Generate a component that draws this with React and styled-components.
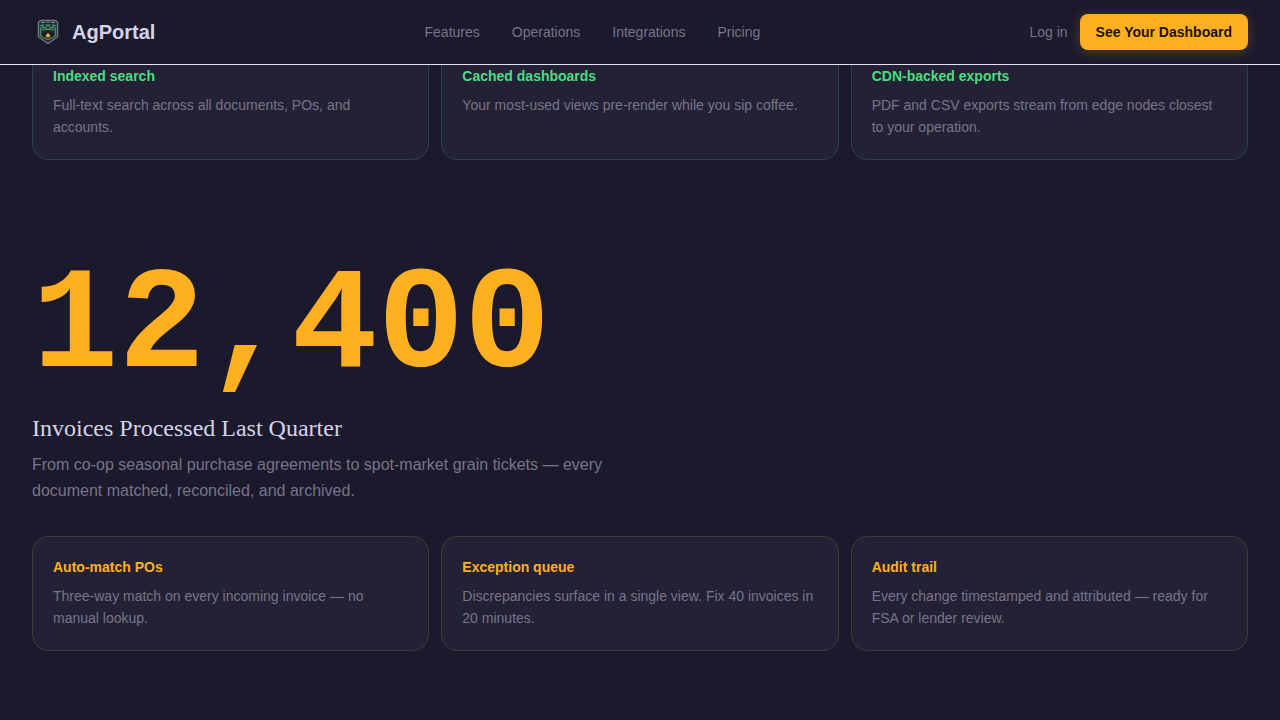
import React from 'react'
import styled, { createGlobalStyle } from 'styled-components'

const GlobalStyle = createGlobalStyle`
  * {
    box-sizing: border-box;
  }
  body {
    margin: 0;
    background: #1b192c;
    color: #d6d3e8;
    font-family: "Liberation Sans", Arial, sans-serif;
    overflow: hidden;
  }
  h2, h3, p {
    margin: 0;
  }
`

const Header = styled.header`
  position: sticky;
  top: 0;
  z-index: 10;
  display: flex;
  align-items: center;
  justify-content: space-between;
  height: 65px;
  padding: 0 32px;
  background: #1b192c;
  border-bottom: 1px solid #e6e3f2;
`
const Brand = styled.a`
  display: flex;
  align-items: center;
  gap: 8px;
  color: #d6d3e8;
  font-size: 20px;
  font-weight: bold;
  text-decoration: none;
`
const Nav = styled.nav`
  display: flex;
  gap: 32px;
`
const NavLink = styled.a`
  color: #787489;
  font-size: 14px;
  text-decoration: none;
`
const Actions = styled.div`
  display: flex;
  align-items: center;
  gap: 12px;
`
const Cta = styled.button`
  height: 36px;
  padding: 0 16px;
  border: 0;
  border-radius: 8px;
  background: #ffb020;
  box-shadow: 0 2px 12px rgba(255, 176, 32, 0.25);
  color: #1a1018;
  font-family: inherit;
  font-size: 14px;
  font-weight: bold;
`
const Main = styled.main`
  display: flex;
  flex-direction: column;
  gap: 96px;
  margin-top: -20px;
  padding: 0 32px 64px;
`
const Cards = styled.div`
  display: grid;
  grid-template-columns: repeat(3, 1fr);
  gap: 12px;
`
const Card = styled.article`
  padding: 20px 20px 21px;
  border: 1px solid ${props => props.$tone === 'green' ? '#2d404d' : '#453937'};
  border-radius: 16px;
  background: #232135;
`
const CardTitle = styled.h3`
  margin-bottom: 8px;
  color: ${props => props.$tone === 'green' ? '#4ade80' : '#ffb020'};
  font-size: 14px;
  line-height: 20px;
`
const CardText = styled.p`
  color: #787489;
  font-size: 14px;
  line-height: 22px;
`
const Figure = styled.p`
  color: #ffb020;
  font-family: "Liberation Mono", "Courier New", monospace;
  font-size: 144px;
  font-weight: bold;
  line-height: 144px;
`
const Heading = styled.h2`
  margin-top: 16px;
  font-family: "Liberation Serif", "Times New Roman", serif;
  font-size: 24px;
  font-weight: normal;
  line-height: 24px;
`
const Lead = styled.p`
  max-width: 600px;
  margin: 12px 0 32px;
  color: #787489;
  font-size: 16px;
  line-height: 26px;
`

const speedCards = [
  { title: 'Indexed search', text: 'Full-text search across all documents, POs, and accounts.' },
  { title: 'Cached dashboards', text: 'Your most-used views pre-render while you sip coffee.' },
  { title: 'CDN-backed exports', text: 'PDF and CSV exports stream from edge nodes closest to your operation.' }
]

const invoiceCards = [
  { title: 'Auto-match POs', text: 'Three-way match on every incoming invoice — no manual lookup.' },
  { title: 'Exception queue', text: 'Discrepancies surface in a single view. Fix 40 invoices in 20 minutes.' },
  { title: 'Audit trail', text: 'Every change timestamped and attributed — ready for FSA or lender review.' }
]

const Logo = () => (
  <svg width="32" height="32" viewBox="0 0 32 32" fill="none" aria-hidden="true">
    <path d="M6.5 6 8.500 4.500h15L25.500 6v15L16 27.500 6.500 21z" fill="#1c2a30" stroke="#74797f" strokeWidth="1.400" />
    <path d="M8 8.500h16v5l-3 2-2-1.500h-6L11 15.500l-3-2z" fill="#2d5f4e" />
    <path d="M9 6.500h4M19 6.500h4M14.500 6h3" stroke="#8b9095" strokeWidth="1" />
    <path d="M8.500 12v7.500L13 23M23.500 12v7.500L19 23" stroke="#4c8a70" strokeWidth="1.300" />
    <path d="M9 9.500h3M14 9h4M20 9.500h3M11 11.500h3M18 11.500h3M13 13.500h6" stroke="#559478" strokeWidth="1" />
    <path d="M12 10h2M18 10h2M15 12h2" stroke="#16202a" strokeWidth="1" />
    <path d="M11 17l5-2.500 5 2.500v4l-5 3.500-5-3.500z" fill="#1c1c20" />
    <path d="M12.500 21.500 16 24l3.500-2.500" stroke="#8a8c88" strokeWidth="1" />
    <path d="M13 20l3-4 3 4-3 2.500z" fill="#8a5f2c" />
    <circle cx="16" cy="19.500" r="1.600" fill="#f0bd58" />
  </svg>
)

const CardRow = ({ cards, tone }) => (
  <Cards>
    {cards.map(card => (
      <Card key={card.title} $tone={tone}>
        <CardTitle $tone={tone}>{card.title}</CardTitle>
        <CardText>{card.text}</CardText>
      </Card>
    ))}
  </Cards>
)

const App = () => (
  <>
    <GlobalStyle />
    <Header>
      <Brand href="#"><Logo />AgPortal</Brand>
      <Nav>
        <NavLink href="#features">Features</NavLink>
        <NavLink href="#operations">Operations</NavLink>
        <NavLink href="#integrations">Integrations</NavLink>
        <NavLink href="#pricing">Pricing</NavLink>
      </Nav>
      <Actions>
        <NavLink href="#login">Log in</NavLink>
        <Cta type="button">See Your Dashboard</Cta>
      </Actions>
    </Header>
    <Main>
      <section>
        <CardRow cards={speedCards} tone="green" />
      </section>
      <section>
        <Figure>12,400</Figure>
        <Heading>Invoices Processed Last Quarter</Heading>
        <Lead>
          From co-op seasonal purchase agreements to spot-market grain tickets — every document matched, reconciled, and archived.
        </Lead>
        <CardRow cards={invoiceCards} tone="amber" />
      </section>
    </Main>
  </>
)

export default App
